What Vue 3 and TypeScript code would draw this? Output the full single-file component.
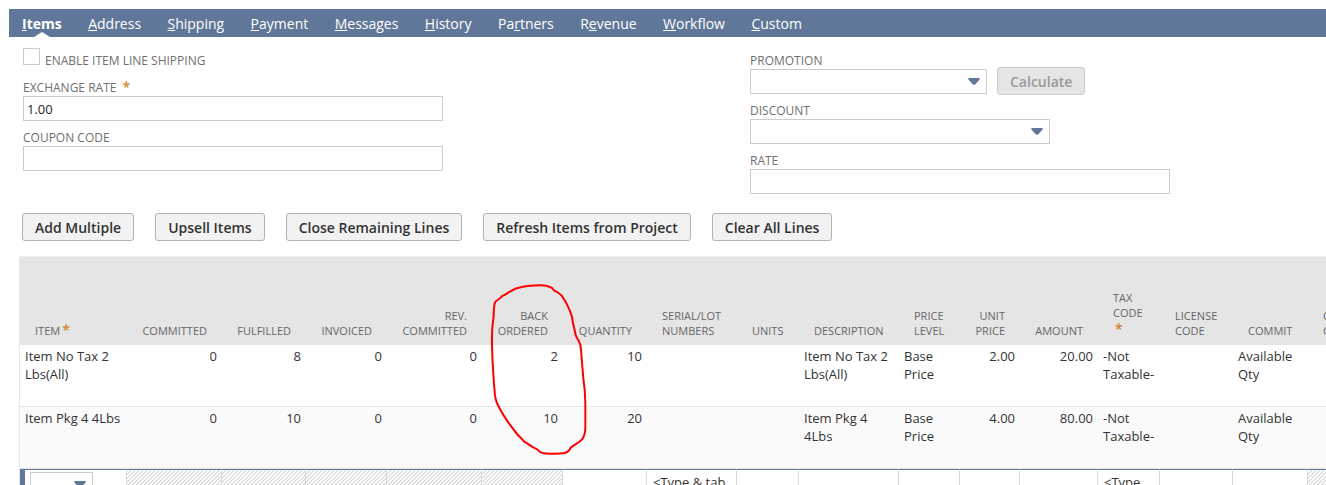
<script setup lang="ts">
import { ref } from 'vue'

interface Tab { before: string; key: string; after: string }
interface Column { head: string[]; width: number; right?: boolean; required?: boolean; locked?: boolean; hint?: string }

const tabs: Tab[] = [
  { before: '', key: 'I', after: 'tems' },
  { before: '', key: 'A', after: 'ddress' },
  { before: '', key: 'S', after: 'hipping' },
  { before: '', key: 'P', after: 'ayment' },
  { before: '', key: 'M', after: 'essages' },
  { before: '', key: 'H', after: 'istory' },
  { before: 'Pa', key: 'r', after: 'tners' },
  { before: 'R', key: 'e', after: 'venue' },
  { before: '', key: 'W', after: 'orkflow' },
  { before: '', key: 'C', after: 'ustom' },
]
const active = ref(0)

const lineShipping = ref(false)
const exchangeRate = ref('1.00')
const coupon = ref('')
const rate = ref('')

const actions = ['Add Multiple', 'Upsell Items', 'Close Remaining Lines', 'Refresh Items from Project', 'Clear All Lines']

const columns: Column[] = [
  { head: ['ITEM'], width: 107, required: true },
  { head: ['COMMITTED'], width: 95, right: true, locked: true },
  { head: ['FULFILLED'], width: 84, right: true, locked: true },
  { head: ['INVOICED'], width: 81, right: true, locked: true },
  { head: ['REV.', 'COMMITTED'], width: 95, right: true, locked: true },
  { head: ['BACK', 'ORDERED'], width: 81, right: true, locked: true },
  { head: ['QUANTITY'], width: 84, right: true },
  { head: ['SERIAL/LOT', 'NUMBERS'], width: 90, hint: '<Type & tab' },
  { head: ['UNITS'], width: 62 },
  { head: ['DESCRIPTION'], width: 100 },
  { head: ['PRICE', 'LEVEL'], width: 61 },
  { head: ['UNIT', 'PRICE'], width: 60, right: true },
  { head: ['AMOUNT'], width: 78, right: true },
  { head: ['TAX', 'CODE'], width: 62, required: true, hint: '<Type' },
  { head: ['LICENSE', 'CODE'], width: 73 },
  { head: ['COMMIT'], width: 75 },
  { head: ['C', 'C'], width: 90, locked: true },
]

const rows: string[][] = [
  ['Item No Tax 2 Lbs(All)', '0', '8', '0', '0', '2', '10', '', '', 'Item No Tax 2 Lbs(All)', 'Base Price', '2.00', '20.00', '-Not Taxable-', '', 'Available Qty', ''],
  ['Item Pkg 4 4Lbs', '0', '10', '0', '0', '10', '20', '', '', 'Item Pkg 4 4Lbs', 'Base Price', '4.00', '80.00', '-Not Taxable-', '', 'Available Qty', ''],
]
</script>

<template>
  <div class="page">
    <nav class="bar">
      <div class="tabs">
        <a v-for="(t, i) in tabs" :key="i" href="#" class="tab" :class="{ active: i === active }" @click.prevent="active = i">{{ t.before }}<u>{{ t.key }}</u>{{ t.after }}</a>
      </div>
    </nav>

    <form class="fields" @submit.prevent>
      <div class="column">
        <div class="check-row">
          <input id="line-shipping" v-model="lineShipping" type="checkbox" class="check">
          <label for="line-shipping" class="label">ENABLE ITEM LINE SHIPPING</label>
        </div>
        <div class="field">
          <label for="exchange" class="label">EXCHANGE RATE <span class="star spaced">*</span></label>
          <input id="exchange" v-model="exchangeRate" type="text" class="box">
        </div>
        <div class="field">
          <label for="coupon" class="label">COUPON CODE</label>
          <input id="coupon" v-model="coupon" type="text" class="box">
        </div>
      </div>
      <div class="column">
        <div class="field">
          <label for="promotion" class="label">PROMOTION</label>
          <div class="inline">
            <div class="picker promo">
              <select id="promotion" class="box"><option></option></select>
              <svg class="arrow" viewBox="0 0 12 7"><path d="M1 0H11Q12.300 0.400 11.400 1.700L7.300 6.300Q6 7.400 4.700 6.300L0.600 1.700Q-0.300 0.400 1 0Z" /></svg>
            </div>
            <button type="button" class="btn" disabled>Calculate</button>
          </div>
        </div>
        <div class="field">
          <label for="discount" class="label">DISCOUNT</label>
          <div class="picker discount">
            <select id="discount" class="box"><option></option></select>
            <svg class="arrow" viewBox="0 0 12 7"><path d="M1 0H11Q12.300 0.400 11.400 1.700L7.300 6.300Q6 7.400 4.700 6.300L0.600 1.700Q-0.300 0.400 1 0Z" /></svg>
          </div>
        </div>
        <div class="field">
          <label for="rate" class="label">RATE</label>
          <input id="rate" v-model="rate" type="text" class="box">
        </div>
      </div>
    </form>

    <div class="actions">
      <button v-for="a in actions" :key="a" type="button" class="btn">{{ a }}</button>
    </div>

    <div class="grid">
      <table>
        <colgroup>
          <col v-for="(c, i) in columns" :key="i" :style="{ width: c.width + 'px' }">
        </colgroup>
        <thead>
          <tr>
            <th v-for="(c, i) in columns" :key="i" scope="col" :class="{ right: c.right }">
              <template v-for="(line, n) in c.head" :key="n"><br v-if="n > 0">{{ line }}</template>
              <span v-if="c.required && c.head.length === 1" class="star near">*</span>
              <span v-else-if="c.required" class="star below">*</span>
            </th>
          </tr>
        </thead>
        <tbody>
          <tr v-for="(r, ri) in rows" :key="ri" class="line">
            <td v-for="(cell, ci) in r" :key="ci" :class="{ right: columns[ci].right }">{{ cell }}</td>
          </tr>
          <tr class="entry">
            <td v-for="(c, i) in columns" :key="i" :class="{ locked: c.locked, first: i === 0 }">
              <div v-if="i === 0" class="picker item">
                <select class="box" aria-label="Item"><option></option></select>
                <svg class="arrow" viewBox="0 0 12 7"><path d="M1 0H11Q12.300 0.400 11.400 1.700L7.300 6.300Q6 7.400 4.700 6.300L0.600 1.700Q-0.300 0.400 1 0Z" /></svg>
              </div>
              <template v-else>{{ c.hint }}</template>
            </td>
          </tr>
        </tbody>
      </table>
      <svg class="mark" viewBox="0 0 390 570">
        <path d="M75 82C82 73 90 73 97 62C104 62 112 53 120 50Q138 38 155 36Q178 31 210 31Q230 31 245 38L252 46Q267 53 275 62Q290 82 300 108Q308 126 309 145Q313 160 317 180Q320 189 326 197Q333 209 333 225Q337 275 340 310Q346 350 346 385V460Q345 482 336 493C327 504 313 508 302 518Q297 531 284 534Q266 537 240 536Q214 536 209 530Q202 522 191 518L162 499Q140 479 122 452Q105 430 85 393Q74 370 74 350Q68 285 66 210Q65 160 71 125Q71 95 75 82Z" />
      </svg>
    </div>
  </div>
</template>

<style>
body { margin: 0; background: #fff; }
</style>

<style scoped>
.page {
  box-sizing: border-box;
  height: 100vh;
  overflow: hidden;
  padding-top: 9px;
  font-family: "Open Sans", "Noto Sans", sans-serif;
  font-size: 13px;
  color: #333;
}
.bar { margin-left: 9px; background: #607799; }
.tabs {
  display: flex;
  justify-content: space-between;
  max-width: 806px;
  height: 28px;
}
.tab {
  position: relative;
  padding: 0 13px;
  font-size: 14px;
  line-height: 29px;
  color: #fff;
  text-decoration: none;
}
.tab.active { font-weight: 700; }
.tab.active::after {
  content: "";
  position: absolute;
  left: 50%;
  bottom: 0;
  margin-left: -8px;
  border: 8px solid transparent;
  border-top: 0;
  border-bottom: 5px solid #fff;
}
.fields {
  display: grid;
  grid-template-columns: minmax(0, 727fr) minmax(0, 576fr);
  padding: 10px 0 0 23px;
}
.check-row { display: flex; align-items: flex-start; height: 27px; gap: 5px; }
.check-row .label { padding-top: 5px; }
.check {
  appearance: none;
  width: 17px;
  height: 17px;
  margin: 1px 0 0;
  border: 1px solid #ccc;
  background: #fff;
}
.check:checked { background: #607799; }
.label { display: block; font-size: 12px; line-height: 18px; color: #6f6f6f; }
.field { max-width: 420px; height: 50px; }
.field > .label { height: 17px; padding-top: 5px; }
.box {
  box-sizing: border-box;
  display: block;
  width: 100%;
  height: 25px;
  padding: 0 3px;
  border: 1px solid #ccc;
  border-radius: 0;
  background: #fff;
  font: 13px "Open Sans", "Noto Sans", sans-serif;
  color: #262626;
  appearance: none;
}
.star { font-size: 14px; font-weight: 600; line-height: 14px; color: #d0862a; }
.star.spaced { margin-left: 3px; }
.inline { display: flex; align-items: flex-end; gap: 10px; height: 26px; margin-top: -1px; }
.inline .btn { margin-bottom: -1px; }
.picker { position: relative; }
.promo { width: 237px; }
.discount { width: 300px; }
.item { width: 63px; }
.arrow {
  position: absolute;
  right: 7px;
  top: 9px;
  width: 12px;
  height: 7px;
  fill: #607799;
  pointer-events: none;
}
.btn {
  height: 28px;
  padding: 0 12px;
  border: 1px solid #b2b2b2;
  border-radius: 3px;
  background: #f2f2f2;
  font: 600 14px "Open Sans", "Noto Sans", sans-serif;
  color: #333;
  white-space: nowrap;
}
.btn:disabled { border-color: #ccc; background: #e5e5e5; color: #999; }
.actions { display: flex; gap: 21px; padding: 16px 0 15px 22px; }
.grid {
  position: relative;
  margin-left: 19px;
  border-top: 1px solid #efefef;
  border-left: 1px solid #e8e8e8;
}
table { width: 1378px; table-layout: fixed; border-collapse: separate; border-spacing: 0; }
th {
  height: 81px;
  padding: 0 15px 7px;
  background: #e5e5e5;
  vertical-align: bottom;
  text-align: left;
  font-size: 11px;
  font-weight: 400;
  line-height: 15px;
  color: #666;
  white-space: nowrap;
}
.near { margin-left: 2px; }
.below { display: block; padding-left: 2px; line-height: 18px; }
td { vertical-align: top; line-height: 18px; }
.line td { height: 59px; padding: 2px 5px 0; border-bottom: 1px solid #e5e5e5; }
.line:nth-child(2) td { background: #fafafa; }
.right { text-align: right; }
.entry td {
  height: 40px;
  padding: 3px 6px 0;
  border-top: 1px solid #607799;
  border-right: 1px solid #d9d9d9;
  white-space: nowrap;
}
.entry .first { padding: 2px 5px 0; border-left: 5px solid #607799; }
.entry .locked {
  background: linear-gradient(135deg, #d6d6d6 12%, #fff 13% 49%, #d6d6d6 50% 62%, #fff 63%) 0 0 / 4px 4px;
}
.mark {
  position: absolute;
  left: 450px;
  top: 18px;
  width: 130px;
  height: 190px;
  fill: none;
  stroke: #f00;
  stroke-width: 6;
  stroke-linejoin: round;
  pointer-events: none;
}
</style>
